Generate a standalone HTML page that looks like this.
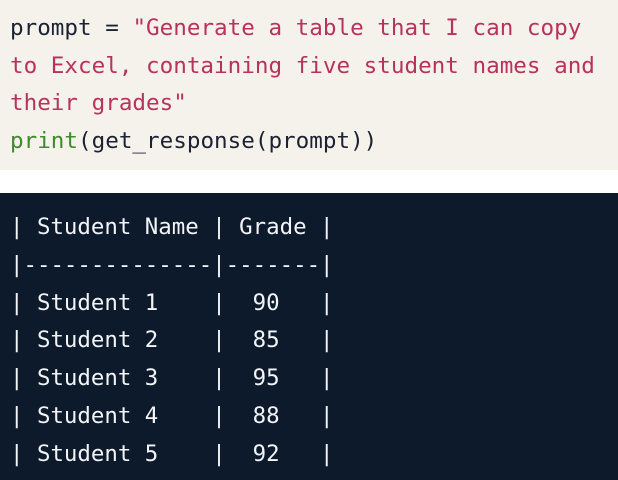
<!DOCTYPE html>
<html><head><style>
body{margin:0;width:618px;height:480px;background:#fff;overflow:hidden;font-family:"DejaVu Sans Mono","Liberation Mono",monospace;}
.top{position:absolute;left:0;top:0;width:618px;height:170px;background:#f5f2eb;}
.bot{position:absolute;left:0;top:193px;width:618px;height:287px;background:#0c1a2c;}
pre{margin:0;position:absolute;font-family:inherit;white-space:pre;}
.t{left:10px;top:10px;font-size:22.6px;line-height:37.5px;color:#1a2233;}
.s{color:#b8325e}.g{color:#3f8a2a}
.b{left:10px;top:209px;font-size:22.4px;line-height:37.8px;color:#f2f4f7;}
</style></head><body>
<div class="top"></div><div class="bot"></div>
<pre class="t">prompt = <span class="s">"Generate a table that I can copy
to Excel, containing five student names and
their grades"</span>
<span class="g">print</span>(get_response(prompt))</pre>
<pre class="b">| Student Name | Grade |
|--------------|-------|
| Student 1    |  90   |
| Student 2    |  85   |
| Student 3    |  95   |
| Student 4    |  88   |
| Student 5    |  92   |</pre>
</body></html>
